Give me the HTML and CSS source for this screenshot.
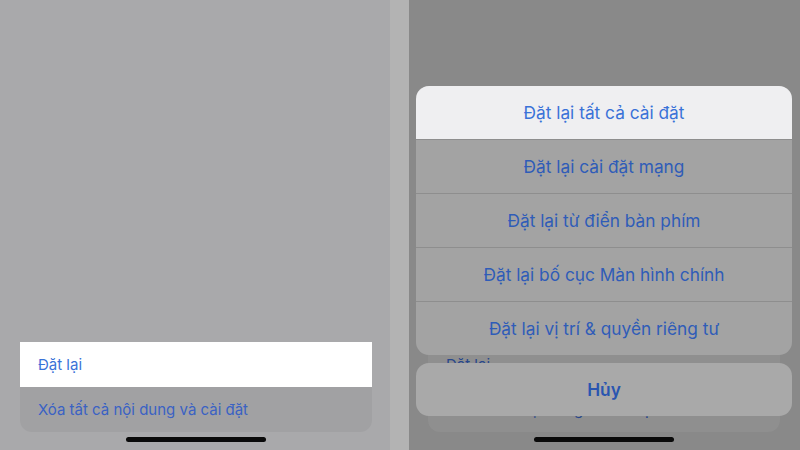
FILE: index.html
```html
<!DOCTYPE html>
<html lang="vi">
<head>
<meta charset="utf-8">
<link rel="stylesheet" href="styles.css">
</head>
<body>
<div class="screen">
  <section class="panel panel-left">
    <div class="sheet">
      <div class="sheet-row sheet-row-active">Đặt lại</div>
      <div class="sheet-row">Xóa tất cả nội dung và cài đặt</div>
    </div>
    <div class="home-bar"></div>
  </section>
  <div class="divider"></div>
  <section class="panel panel-right">
    <div class="sheet sheet-dim">
      <div class="sheet-row">Đặt lại</div>
      <div class="sheet-row">Xóa tất cả nội dung và cài đặt</div>
    </div>
    <div class="home-bar"></div>
    <div class="action-overlay">
      <div class="action-group">
        <div class="action action-active">Đặt lại tất cả cài đặt</div>
        <div class="action">Đặt lại cài đặt mạng</div>
        <div class="action">Đặt lại từ điển bàn phím</div>
        <div class="action">Đặt lại bố cục Màn hình chính</div>
        <div class="action">Đặt lại vị trí &amp; quyền riêng tư</div>
      </div>
      <div class="action-cancel">Hủy</div>
    </div>
  </section>
</div>
</body>
</html>
```

FILE: styles.css
```css
html, body {
  margin: 0;
  padding: 0;
}
body {
  width: 800px;
  height: 450px;
  overflow: hidden;
  font-family: "Inter", "Roboto", "Liberation Sans", sans-serif;
}
.screen {
  display: flex;
  width: 800px;
  height: 450px;
}
.panel {
  display: flex;
  flex-direction: column;
  justify-content: flex-end;
  height: 450px;
}
.panel-left {
  width: 390px;
  background: #a9a9ab;
  padding: 0 18px 0 20px;
  box-sizing: border-box;
}
.divider {
  width: 19px;
  background: #b3b3b3;
}
.panel-right {
  position: relative;
  width: 391px;
  background: #898989;
  padding: 0 20px 0 19px;
  box-sizing: border-box;
}
.sheet {
  display: flex;
  flex-direction: column;
  border-radius: 0 0 12px 12px;
  overflow: hidden;
  background: #a1a1a3;
}
.sheet-row {
  height: 45px;
  display: flex;
  align-items: center;
  padding-left: 18px;
  font-size: 15px;
  color: #3a62c4;
}
.sheet-row-active {
  background: #ffffff;
  color: #3a72d8;
}
.sheet-dim {
  background: #8f8f8f;
}
.sheet-dim .sheet-row {
  color: #28478c;
}
.home-bar {
  align-self: center;
  width: 140px;
  height: 5px;
  border-radius: 3px;
  background: #0a0a0a;
  margin: 5px 0 8px;
}
.action-overlay {
  position: absolute;
  left: 7px;
  right: 8px;
  top: 86px;
  display: flex;
  flex-direction: column;
  gap: 8px;
}
.action-group {
  display: flex;
  flex-direction: column;
  border-radius: 13px;
  overflow: hidden;
  background: #a3a3a3;
}
.action {
  height: 54px;
  box-sizing: border-box;
  display: flex;
  align-items: center;
  justify-content: center;
  font-size: 17.3px;
  color: #2f5cb8;
  border-top: 1px solid #8e8e8e;
}
.action:first-child {
  border-top: none;
  height: 53px;
}
.action-active {
  background: #efeff1;
  color: #3a72d8;
}
.action-cancel {
  height: 53px;
  border-radius: 13px;
  background: #a9a9a9;
  display: flex;
  align-items: center;
  justify-content: center;
  font-size: 17.3px;
  font-weight: 600;
  color: #2a55b0;
}
```
